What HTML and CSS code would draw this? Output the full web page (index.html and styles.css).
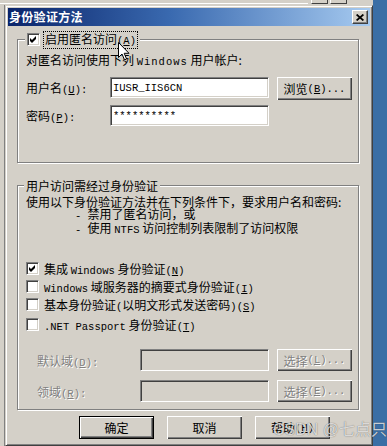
FILE: index.html
```html
<!DOCTYPE html>
<html>
<head>
<meta charset="utf-8">
<title>身份验证方法</title>
<link rel="stylesheet" href="styles.css">
</head>
<body>
<div class="screen">
  <div class="behind-top">
    <div class="behind-line"></div>
    <div class="behind-btns"><span class="bb"></span><span class="bb"></span></div>
  </div>
  <div class="stage">
    <div class="behind-left"></div>
    <div class="dialog">
      <div class="titlebar">
        <span class="title">身份验证方法</span>
        <span class="close">
          <svg width="8" height="7" viewBox="0 0 8 7"><path d="M0.6 0.5 L7.4 6.5 M7.4 0.5 L0.6 6.5" stroke="#000" stroke-width="1.7" fill="none"/></svg>
        </span>
      </div>
      <div class="content">
        <div class="group g1">
          <div class="legend legend-check">
            <span class="cb"><svg width="7" height="7" viewBox="0 0 7 7"><polygon points="0,2 2,4 6,0 6,3 2,7 0,5" fill="#000"/></svg></span>
            <span class="focus">启用匿名访问<span class="en">(<u>A</u>)</span></span>
          </div>
          <div class="line">对匿名访问使用下列 <span class="en sp">Windows</span> 用户帐户:</div>
          <div class="frow">
            <span class="flabel">用户名<span class="en">(<u>U</u>):</span></span>
            <span class="field wide"><span class="en">IUSR_IIS6CN</span></span>
            <span class="btn side">浏览<span class="en">(<u>B</u>)...</span></span>
          </div>
          <div class="frow r2">
            <span class="flabel">密码<span class="en">(<u>P</u>):</span></span>
            <span class="field wide"><span class="en">**********</span></span>
          </div>
        </div>

        <div class="group g2">
          <div class="legend legend-text">用户访问需经过身份验证</div>
          <div class="para">使用以下身份验证方法并在下列条件下，要求用户名和密码:</div>
          <div class="para indent"><span class="en">- </span>禁用了匿名访问，或</div>
          <div class="para indent"><span class="en">- </span>使用 <span class="en">NTFS</span> 访问控制列表限制了访问权限</div>

          <div class="crow first">
            <span class="cb"><svg width="7" height="7" viewBox="0 0 7 7"><polygon points="0,2 2,4 6,0 6,3 2,7 0,5" fill="#000"/></svg></span>
            <span>集成 <span class="en">Windows</span> 身份验证<span class="en">(<u>N</u>)</span></span>
          </div>
          <div class="crow">
            <span class="cb"></span>
            <span><span class="en">Windows</span> 域服务器的摘要式身份验证<span class="en">(<u>I</u>)</span></span>
          </div>
          <div class="crow">
            <span class="cb"></span>
            <span>基本身份验证<span class="en">(</span>以明文形式发送密码<span class="en">)(<u>S</u>)</span></span>
          </div>
          <div class="crow last">
            <span class="cb"></span>
            <span><span class="en">.NET Passport</span> 身份验证<span class="en">(<u>T</u>)</span></span>
          </div>

          <div class="drow first">
            <span class="dlabel disabled">默认域<span class="en">(<u>D</u>):</span></span>
            <span class="field narrow off"></span>
            <span class="btn side dis disabled">选择<span class="en">(<u>L</u>)...</span></span>
          </div>
          <div class="drow">
            <span class="dlabel disabled">领域<span class="en">(<u>R</u>):</span></span>
            <span class="field narrow off"></span>
            <span class="btn side dis disabled">选择<span class="en">(<u>E</u>)...</span></span>
          </div>
        </div>

        <div class="actions">
          <span class="btn act default">确定</span>
          <span class="btn act">取消</span>
          <span class="btn act">帮助<span class="en">(<u>H</u>)</span></span>
        </div>
      </div>
    </div>
  </div>
</div>
<svg class="cursor" width="12" height="19" viewBox="0 0 12 19"><path d="M0.5 0.5 L0.5 15.5 L4 12 L6.5 17.8 L8.6 17 L6.2 11.3 L11 11.3 Z" fill="#fff" stroke="#000" stroke-width="1"/></svg>
<div class="watermark">CSDN @七点只</div>
</body>
</html>
```

FILE: styles.css
```css
* { box-sizing: border-box; }

body {
  margin: 0;
  width: 387px;
  height: 446px;
  overflow: hidden;
  position: relative;
  background: #3a6ea5;
  font-family: "Noto Sans CJK SC", "Liberation Sans", sans-serif;
  font-size: 12px;
  color: #000;
}

.screen {
  width: 373px;
  height: 446px;
  background: #d4d0c8;
  display: flex;
  flex-direction: column;
}

.behind-top {
  height: 5px;
  flex: none;
  display: flex;
  align-items: flex-start;
}
.behind-line {
  flex: 1;
  height: 1px;
  margin-top: 3px;
  background: #fff;
}
.behind-btns {
  display: flex;
  gap: 2px;
  margin-right: 26px;
  padding-left: 3px;
}
.bb {
  width: 17px;
  height: 4px;
  border-right: 1px solid #404040;
  border-bottom: 1px solid #404040;
  border-left: 1px solid #fff;
}

.stage {
  flex: 1;
  display: flex;
}
.behind-left {
  width: 5px;
  flex: none;
  border-right: 1px solid #808080;
  background: #d4d0c8;
}

.dialog {
  width: 368px;
  height: 441px;
  flex: none;
  background: #d4d0c8;
  border: 1px solid;
  border-color: #d4d0c8 #404040 #404040 #d4d0c8;
  box-shadow: inset 1px 1px 0 #fff, inset -1px -1px 0 #808080;
  padding: 2px;
  display: flex;
  flex-direction: column;
}

.titlebar {
  height: 18px;
  flex: none;
  background: linear-gradient(to right, #0a246a 0%, #3a6ab0 45%, #a6caf0 100%);
  display: flex;
  align-items: center;
  justify-content: space-between;
  padding: 0 2px 0 1px;
}
.title {
  color: #fff;
  font-weight: bold;
  font-size: 12px;
  line-height: 14px;
  letter-spacing: 0.3px;
}
.close {
  width: 16px;
  height: 14px;
  background: #d4d0c8;
  border: 1px solid;
  border-color: #fff #404040 #404040 #fff;
  box-shadow: inset -1px -1px 0 #808080;
  display: flex;
  align-items: center;
  justify-content: center;
  padding-right: 1px;
}

.content {
  padding: 13px 11px 0 9px;
  display: flex;
  flex-direction: column;
}

.group {
  position: relative;
  border: 1px solid #808080;
  box-shadow: inset 1px 1px 0 #fff, 1px 1px 0 #fff;
  padding: 0 0 0 8px;
}
.g1 {
  height: 124px;
  padding-top: 13px;
}
.g2 {
  margin-top: 22px;
  height: 225px;
  padding-top: 10px;
}

.legend {
  position: absolute;
  top: -8px;
  background: #d4d0c8;
  display: flex;
  align-items: center;
  line-height: 14px;
  height: 15px;
}
.legend-check {
  left: 7px;
  padding: 0 2px;
  gap: 3px;
}
.legend-text {
  left: 6px;
  padding: 0 2px;
}
.focus {
  border: 1px dotted #000;
  padding: 0 1px;
  line-height: 13px;
}

.en {
  font-family: "Liberation Mono", "DejaVu Sans Mono", monospace;
  font-size: 10.5px;
}
.sp { letter-spacing: 1px; }
u { text-underline-offset: 1px; }

.line { line-height: 14px; }

.frow {
  display: flex;
  align-items: flex-start;
  margin-top: 8px;
}
.frow.r2 { margin-top: 5px; }
.flabel {
  width: 84px;
  height: 21px;
  line-height: 21px;
}

.field {
  height: 21px;
  background: #fff;
  border: 1px solid;
  border-color: #808080 #fff #fff #808080;
  box-shadow: inset 1px 1px 0 #404040, inset -1px -1px 0 #d4d0c8;
  display: flex;
  align-items: center;
  padding-left: 2px;
}
.field.wide { width: 159px; }
.field.narrow { width: 129px; height: 22px; }
.field.off { background: #d4d0c8; }

.btn {
  height: 23px;
  background: #d4d0c8;
  box-shadow: inset 1px 1px 0 #fff, inset -1px -1px 0 #404040, inset -2px -2px 0 #808080;
  display: flex;
  align-items: center;
  justify-content: center;
  width: 75px;
}
.btn.side { margin-left: 8px; }
.btn.dis { height: 22px; }
.btn.default {
  border: 1px solid #000;
}

.disabled {
  color: #808080;
  text-shadow: 1px 1px 0 #fff;
}

.para { line-height: 12px; }
.para.indent { padding-left: 49px; }

.crow {
  display: flex;
  align-items: center;
  gap: 5px;
  height: 18px;
}
.crow.first { margin-top: 23px; }
.crow.last { margin-top: 2px; }

.cb {
  width: 13px;
  height: 13px;
  flex: none;
  background: #fff;
  border: 1px solid;
  border-color: #808080 #fff #fff #808080;
  box-shadow: inset 1px 1px 0 #404040, inset -1px -1px 0 #d4d0c8;
  display: flex;
  align-items: center;
  justify-content: center;
}

.drow {
  display: flex;
  align-items: center;
  height: 22px;
  margin-top: 9px;
}
.drow.first { margin-top: 16px; }
.dlabel {
  width: 114px;
  padding-left: 11px;
}

.actions {
  display: flex;
  gap: 13px;
  margin-top: 6px;
  padding-left: 62px;
}

.cursor {
  position: absolute;
  left: 118px;
  top: 42px;
}

.watermark {
  position: absolute;
  left: 273px;
  top: 421px;
  font-family: "Liberation Sans", "Noto Sans CJK SC", sans-serif;
  font-size: 16px;
  line-height: 18px;
  color: rgba(255, 255, 255, 0.75);
  text-shadow: 0 0 1px rgba(0, 0, 0, 0.6);
  white-space: nowrap;
}
```
